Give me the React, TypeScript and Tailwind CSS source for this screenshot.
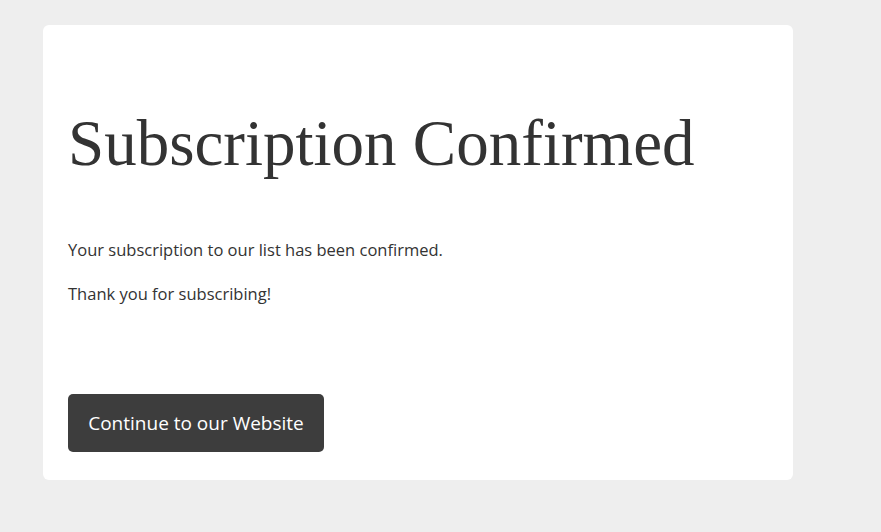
export default function App() {
  return (
    <div className="min-h-[532px] bg-[#eeeeee] pt-[25px] pl-[43px] pb-[52px]">
      <div
        className="w-[750px] rounded-md bg-white px-[25px] pt-[86px] pb-[28px] text-[#333333]"
        style={{ fontFamily: '"Open Sans", "Noto Sans", sans-serif' }}
      >
        <h1
          className="text-[65px] leading-none text-[#333333]"
          style={{ fontFamily: '"Liberation Serif", "Times New Roman", serif' }}
        >
          Subscription Confirmed
        </h1>
        <p className="mt-[62px] text-[16.5px] leading-[24px]">
          Your subscription to our list has been confirmed.
        </p>
        <p className="mt-[20px] text-[16.5px] leading-[24px]">Thank you for subscribing!</p>
        <a
          href="#"
          className="mt-[88px] inline-flex h-[58px] w-[256px] items-center justify-center rounded-[5px] bg-[#3d3d3d] text-[19px] text-white"
        >
          Continue to our Website
        </a>
      </div>
    </div>
  );
}
